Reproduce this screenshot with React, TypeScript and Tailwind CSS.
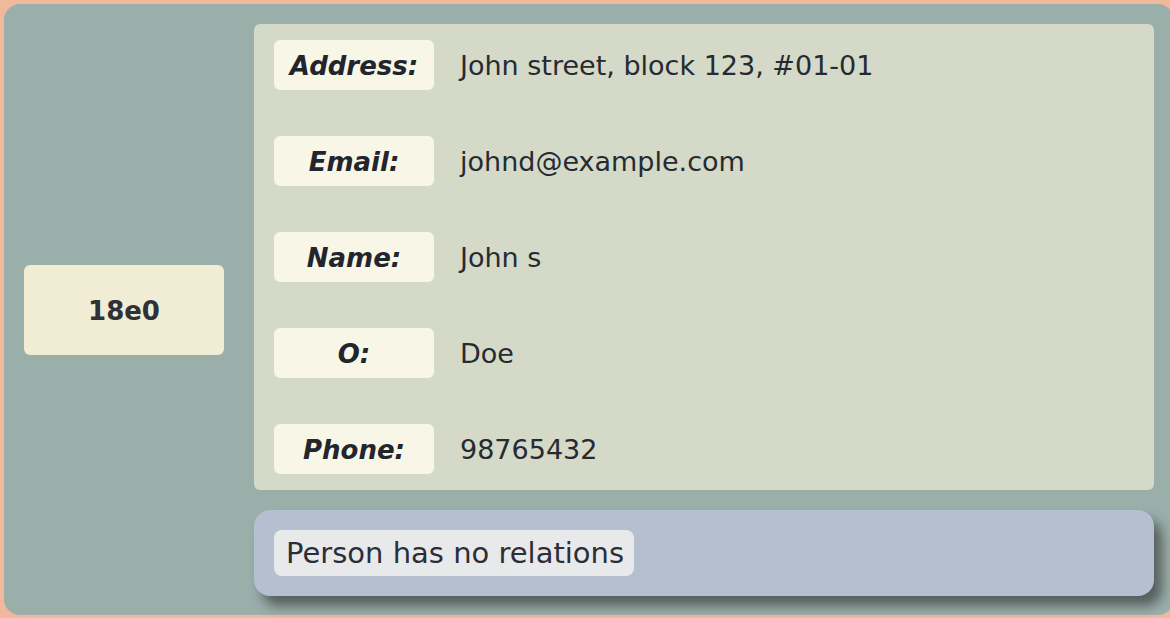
import React from "react";

const rows = [
  { label: "Address:", value: "John street, block 123, #01-01" },
  { label: "Email:", value: "johnd@example.com" },
  { label: "Name:", value: "John s" },
  { label: "O:", value: "Doe" },
  { label: "Phone:", value: "98765432" },
];

export default function App() {
  return (
    <div
      className="w-[1170px] h-[618px] bg-[#f1b99b] pl-[4px] pt-[4px] pb-[3px] overflow-hidden"
      style={{ fontFamily: '"DejaVu Sans", "Open Sans", sans-serif' }}
    >
      <div className="w-[1170px] h-[611px] bg-[#9aaeaa] rounded-[16px] pl-[20px] pt-[20px] flex gap-[30px]">
        <div className="w-[200px] flex items-center pb-[19px]">
          <div className="w-[200px] h-[90px] bg-[#f1ecd4] rounded-[6px] flex items-center justify-center pt-[3px] text-[26px] font-bold text-[#2e3138]">
            18e0
          </div>
        </div>
        <div className="w-[900px] flex flex-col gap-[20px]">
          <div className="h-[466px] bg-[#d5d9c7] rounded-[6px] px-[20px] py-[16px] flex flex-col gap-[46px]">
            {rows.map((r) => (
              <div key={r.label} className="flex items-center h-[50px]">
                <div className="w-[160px] h-[50px] bg-[#f8f6e6] rounded-[6px] flex items-center justify-center pt-[2px] text-[26px] font-bold italic text-[#22252d]">
                  {r.label}
                </div>
                <div className="ml-[26px] pt-[2px] text-[27px] text-[#262a33]">{r.value}</div>
              </div>
            ))}
          </div>
          <div className="h-[86px] bg-[#b4c0d0] rounded-[16px] p-[20px] shadow-[8px_10px_12px_rgba(0,0,0,0.45)]">
            <div className="inline-flex items-center h-[46px] pl-[12px] pr-[10px] pt-[2px] bg-[#e8e9eb] rounded-[8px] text-[29px] text-[#2b2e36]">
              Person has no relations
            </div>
          </div>
        </div>
      </div>
    </div>
  );
}
